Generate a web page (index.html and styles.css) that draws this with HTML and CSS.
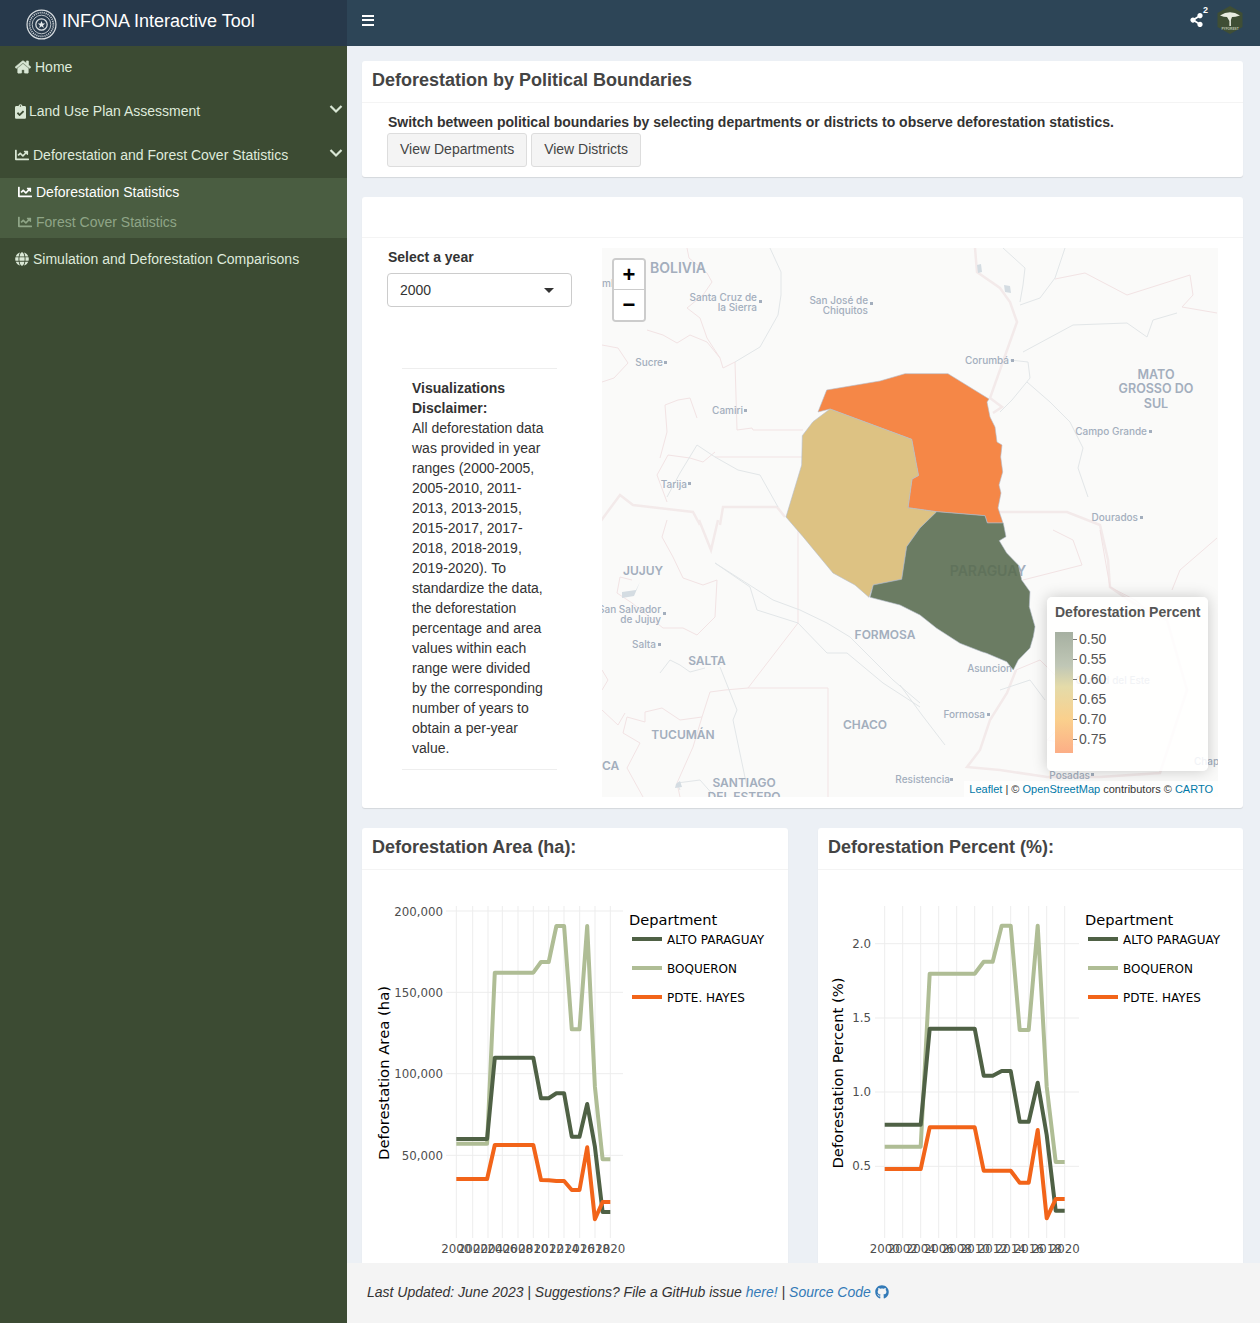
FILE: index.html
```html
<!DOCTYPE html>
<html lang="en">
<head>
<meta charset="utf-8">
<title>INFONA Interactive Tool</title>
<link rel="stylesheet" href="styles.css">
</head>
<body>
<div class="app">
  <aside class="sidebar">
    <div class="brand">
      <svg class="seal" viewBox="0 0 30 30"><circle cx="15" cy="15" r="14" class="seal-a"/><circle cx="15" cy="15" r="11.5" class="seal-b"/><circle cx="15" cy="15" r="9" class="seal-c"/><circle cx="15" cy="15" r="5.5" class="seal-a"/><polygon points="15,11.5 16,14 18.6,14 16.5,15.7 17.3,18.3 15,16.7 12.7,18.3 13.5,15.7 11.4,14 14,14" class="seal-s"/></svg>
      <span>INFONA Interactive Tool</span>
    </div>
    <nav class="menu">
      <a class="item item-home"><svg class="ico ico-home" viewBox="0 0 576 512"><path d="M280.37 148.26L96 300.11V464a16 16 0 0 0 16 16l112.06-.29a16 16 0 0 0 15.92-16V368a16 16 0 0 1 16-16h64a16 16 0 0 1 16 16v95.64a16 16 0 0 0 16 16.05L464 480a16 16 0 0 0 16-16V300L295.67 148.26a12.19 12.19 0 0 0-15.3 0zM571.6 251.47L488 182.56V44.05a12 12 0 0 0-12-12h-56a12 12 0 0 0-12 12v72.61L318.47 43a48 48 0 0 0-61 0L4.34 251.47a12 12 0 0 0-1.6 16.9l25.5 31A12 12 0 0 0 45.15 301l235.22-193.74a12.19 12.19 0 0 1 15.3 0L530.9 301a12 12 0 0 0 16.9-1.6l25.5-31a12 12 0 0 0-1.7-16.93z"/></svg><span>Home</span></a>
      <a class="item"><svg class="ico ico-clip" viewBox="0 0 384 512"><path d="M336 64h-80c0-35.3-28.7-64-64-64s-64 28.7-64 64H48C21.5 64 0 85.5 0 112v352c0 26.5 21.5 48 48 48h288c26.5 0 48-21.5 48-48V112c0-26.5-21.5-48-48-48zM192 40c13.3 0 24 10.7 24 24s-10.7 24-24 24-24-10.7-24-24 10.7-24 24-24zm121.2 231.8l-143 141.8c-4.7 4.7-12.3 4.6-17-.1l-82.6-83.3c-4.7-4.7-4.6-12.3.1-17L99.1 285c4.7-4.7 12.3-4.6 17 .1l46 46.4 106-105.2c4.7-4.7 12.3-4.6 17 .1l28.2 28.4c4.7 4.8 4.6 12.3-.1 17z"/></svg><span>Land Use Plan Assessment</span><svg class="chev" viewBox="0 0 14 10"><polyline points="1.5,2 7,7.5 12.5,2"/></svg></a>
      <a class="item"><svg class="ico" viewBox="0 0 512 512"><path d="M496 384H64V80c0-8.84-7.16-16-16-16H16C7.16 64 0 71.16 0 80v336c0 17.67 14.33 32 32 32h464c8.84 0 16-7.16 16-16v-32c0-8.84-7.16-16-16-16zM464 96H345.94c-21.38 0-32.09 25.85-16.97 40.97l32.4 32.4L288 242.75l-73.37-73.37c-12.5-12.5-32.76-12.5-45.25 0l-68.69 68.69c-6.25 6.25-6.25 16.38 0 22.63l22.62 22.62c6.25 6.25 16.38 6.25 22.63 0L192 237.25l73.37 73.37c12.5 12.5 32.76 12.5 45.25 0l96-96 32.4 32.4c15.12 15.12 40.97 4.41 40.97-16.97V112c.01-8.84-7.15-16-15.99-16z"/></svg><span>Deforestation and Forest Cover Statistics</span><svg class="chev" viewBox="0 0 14 10"><polyline points="1.5,2 7,7.5 12.5,2"/></svg></a>
      <div class="submenu">
        <a class="subitem active"><svg class="ico" viewBox="0 0 512 512"><path d="M496 384H64V80c0-8.84-7.16-16-16-16H16C7.16 64 0 71.16 0 80v336c0 17.67 14.33 32 32 32h464c8.84 0 16-7.16 16-16v-32c0-8.84-7.16-16-16-16zM464 96H345.94c-21.38 0-32.09 25.85-16.97 40.97l32.4 32.4L288 242.75l-73.37-73.37c-12.5-12.5-32.76-12.5-45.25 0l-68.69 68.69c-6.25 6.25-6.25 16.38 0 22.63l22.62 22.62c6.25 6.25 16.38 6.25 22.63 0L192 237.25l73.37 73.37c12.5 12.5 32.76 12.5 45.25 0l96-96 32.4 32.4c15.12 15.12 40.97 4.41 40.97-16.97V112c.01-8.84-7.15-16-15.99-16z"/></svg><span>Deforestation Statistics</span></a>
        <a class="subitem"><svg class="ico" viewBox="0 0 512 512"><path d="M496 384H64V80c0-8.84-7.16-16-16-16H16C7.16 64 0 71.16 0 80v336c0 17.67 14.33 32 32 32h464c8.84 0 16-7.16 16-16v-32c0-8.84-7.16-16-16-16zM464 96H345.94c-21.38 0-32.09 25.85-16.97 40.97l32.4 32.4L288 242.75l-73.37-73.37c-12.5-12.5-32.76-12.5-45.25 0l-68.69 68.69c-6.25 6.25-6.25 16.38 0 22.63l22.62 22.62c6.25 6.25 16.38 6.25 22.63 0L192 237.25l73.37 73.37c12.5 12.5 32.76 12.5 45.25 0l96-96 32.4 32.4c15.12 15.12 40.97 4.41 40.97-16.97V112c.01-8.84-7.15-16-15.99-16z"/></svg><span>Forest Cover Statistics</span></a>
      </div>
      <a class="item item-sim"><svg class="ico" viewBox="0 0 496 512"><path d="M336.5 160C322 70.7 287.8 8 248 8s-74 62.7-88.5 152h177zM152 256c0 22.2 1.2 43.5 3.3 64h185.3c2.1-20.5 3.3-41.8 3.3-64s-1.2-43.5-3.3-64H155.3c-2.1 20.5-3.3 41.8-3.3 64zm324.7-96c-28.6-67.9-86.5-120.4-158-141.6 24.4 33.8 41.2 84.7 50 141.6h108zM177.2 18.4C105.8 39.6 47.8 92.1 19.3 160h108c8.7-56.9 25.5-107.8 49.9-141.6zM487.4 192H372.7c2.1 21 3.3 42.5 3.3 64s-1.2 43-3.3 64h114.6c5.5-20.5 8.6-41.8 8.6-64s-3.1-43.5-8.5-64zM120 256c0-21.5 1.2-43 3.3-64H8.6C3.2 212.5 0 233.8 0 256s3.2 43.5 8.6 64h114.6c-2-21-3.2-42.5-3.2-64zm39.5 96c14.5 89.3 48.7 152 88.5 152s74-62.7 88.5-152h-177zm159.3 141.6c71.4-21.2 129.4-73.7 158-141.6h-108c-8.8 56.9-25.6 107.8-50 141.6zM19.3 352c28.6 67.9 86.5 120.4 158 141.6-24.4-33.8-41.2-84.7-50-141.6h-108z"/></svg><span>Simulation and Deforestation Comparisons</span></a>
    </nav>
  </aside>

  <div class="main">
    <header class="navbar">
      <div class="burger"><i></i><i></i><i></i></div>
      <div class="nav-right">
        <div class="share"><svg viewBox="0 0 448 512"><path d="M352 320c-22.608 0-43.387 7.819-59.79 20.895l-102.486-64.054a96.551 96.551 0 0 0 0-41.683l102.486-64.054C308.613 184.181 329.392 192 352 192c53.019 0 96-42.981 96-96S405.019 0 352 0s-96 42.981-96 96c0 7.158.79 14.13 2.276 20.841L155.79 180.895C139.387 167.819 118.608 160 96 160c-53.019 0-96 42.981-96 96s42.981 96 96 96c22.608 0 43.387-7.819 59.79-20.895l102.486 64.054A96.301 96.301 0 0 0 256 416c0 53.019 42.981 96 96 96s96-42.981 96-96-42.981-96-96-96z"/></svg><b>2</b></div>
        <svg class="hex" viewBox="0 0 26 28"><polygon points="13,0 25.5,7 25.5,21 13,28 .5,21 .5,7" class="hex-bg"/><path d="M3 9.5 Q13 3 23 9.5 Q18 11 15 11 L13.9 14 L13.9 20 L12.4 20 L12.4 15 L10 11 Q7 11 3 9.5Z" class="hex-tree"/><text x="13" y="23.5" class="hex-txt">PYFOREST</text></svg>
      </div>
    </header>

    <main class="content">
      <section class="card card-switch">
        <h2 class="card-head">Deforestation by Political Boundaries</h2>
        <div class="switch-body">
          <p class="switch-text">Switch between political boundaries by selecting departments or districts to observe deforestation statistics.</p>
          <div class="btns"><button class="btn">View Departments</button><button class="btn">View Districts</button></div>
        </div>
      </section>

      <section class="card card-map">
        <div class="card-head empty"></div>
        <div class="map-row">
          <div class="controls">
            <label class="ctl-label">Select a year</label>
            <div class="select">2000<i class="caret"></i></div>
            <div class="disclaimer">
              <strong>Visualizations Disclaimer:</strong>
              All deforestation data was provided in year ranges (2000-2005, 2005-2010, 2011-2013, 2013-2015, 2015-2017, 2017-2018, 2018-2019, 2019-2020). To standardize the data, the deforestation percentage and area values within each range were divided by the corresponding number of years to obtain a per-year value.
            </div>
          </div>
          <div class="map">
            <svg class="map-svg" viewBox="602 248 616 549" width="616" height="549">
              <g class="halo">
                <polyline points="600,522 620,495 633,505 693,512 700,525"/>
                <polyline points="720,525 723,507 777,507 785,517"/>
                <polyline points="975,248 977,272 1000,288 1010,302 1017,322 990,398 1002,407 993,413"/>
                <polyline points="998,512 1067,512 1100,525 1108,560 1110,587 1133,603 1167,620 1187,690 1160,773 1100,777 1047,777 1000,770 967,767 980,750 990,720 1007,693 1016,670"/>
                <polyline points="699,520 711,550 718,520"/>
              </g>
              <g class="bline">
                <polyline points="687,248 689,258 707,273 712,282 703,295 687,308 700,318 707,338 720,358 723,368 735,362 737,430 752,428 753,430 803,430"/>
                <polyline points="715,457 803,457"/>
                <polyline points="647,330 663,335 677,343 690,335 707,342 720,358"/>
                <polyline points="668,455 690,458 703,462 715,452"/>
                <polyline points="668,455 657,475 667,502"/>
                <polyline points="665,405 678,400 690,398 697,418"/>
                <polyline points="665,405 667,432 660,458"/>
                <polyline points="602,345 618,348 628,363 614,378 602,382"/>
                <polyline points="667,520 662,537 673,557 683,578 703,585 717,580 715,617 697,635 683,628 663,628 632,603 617,593 620,577 632,580"/>
                <polyline points="798,530 798,623 748,688 725,690 710,692 702,717 680,720 662,708 645,712 645,722 627,717 623,733 640,743 627,768 643,797"/>
                <polyline points="748,688 828,688 828,797"/>
                <polyline points="702,717 693,747 677,783 680,797"/>
                <polyline points="602,670 608,680 602,690"/>
                <polyline points="602,710 618,725 625,713"/>
                <polyline points="1055,279 1085,273 1127,295 1190,275 1193,295 1182,307 1217,313"/>
                <polyline points="1053,530 1073,540 1082,565 1023,580"/>
                <polyline points="1100,530 1110,587 1135,600 1160,620"/>
                <polyline points="1217,538 1180,570 1172,590"/>
                <polyline points="1016,670 1040,660 1060,680 1062,725 1047,740 1077,745"/>
              </g>
              <g class="rline">
                <polyline points="770,248 781,272 781,295 778,315 760,347 735,362"/>
                <polyline points="1003,248 1025,268 1023,285 1020,302"/>
                <polyline points="1065,248 1055,278 1040,298 1020,305"/>
                <polyline points="1023,352 1073,325 1127,323 1147,337 1153,320 1177,313"/>
                <polyline points="1027,382 1050,402 1070,422 1083,448 1078,468 1088,497"/>
                <polyline points="1010,360 1028,362 1030,378 1012,400 1000,412"/>
                <polyline points="715,563 750,587 757,610 798,623 827,653 847,653 883,683 920,707"/>
                <polyline points="715,563 773,600 800,610 827,623 850,637 893,680 920,703"/>
                <polyline points="720,667 737,710 733,720 747,787"/>
                <polyline points="660,673 670,660 680,665 690,672 705,668"/>
                <polyline points="667,497 680,473 697,445 715,457 738,470 760,475 778,507"/>
                <polyline points="900,685 922,715 945,745"/>
                <polyline points="1000,690 1030,680 1045,700"/>
                <polyline points="680,790 677,783 700,780 715,797"/>
              </g>
              <g class="water">
                <polygon points="622,592 636,590 640,582 634,596 622,598"/>
                <polygon points="977,265 981,264 982,272 978,273"/>
                <polygon points="1004,285 1010,286 1011,293 1005,292"/>
                <polygon points="676,784 680,781 682,787 675,788"/>
              </g>
              <g class="lbl">
                <text x="678" y="273" class="xl" text-anchor="middle">BOLIVIA</text>
                <text x="602" y="287">mb</text>
                <text x="757" y="301" text-anchor="end">Santa Cruz de</text>
                <text x="757" y="311" text-anchor="end">la Sierra</text>
                <text x="868" y="304" text-anchor="end">San José de</text>
                <text x="868" y="314" text-anchor="end">Chiquitos</text>
                <text x="663" y="366" text-anchor="end">Sucre</text>
                <text x="743" y="414" text-anchor="end">Camiri</text>
                <text x="1009" y="364" text-anchor="end">Corumbá</text>
                <text x="1147" y="435" text-anchor="end">Campo Grande</text>
                <text x="1138" y="521" text-anchor="end">Dourados</text>
                <text x="687" y="488" text-anchor="end">Tarija</text>
                <text x="661" y="613" text-anchor="end">San Salvador</text>
                <text x="661" y="623" text-anchor="end">de Jujuy</text>
                <text x="656" y="648" text-anchor="end">Salta</text>
                <text x="1012" y="672" text-anchor="end">Asuncion</text>
                <text x="985" y="718" text-anchor="end">Formosa</text>
                <text x="950" y="783" text-anchor="end">Resistencia</text>
                <text x="1090" y="779" text-anchor="end">Posadas</text>
                <text x="1150" y="684" text-anchor="end">Ciudad del Este</text>
                <text x="1194" y="765">Chap</text>
                <text x="1156" y="379" class="big" text-anchor="middle">MATO</text>
                <text x="1156" y="393" class="big" text-anchor="middle">GROSSO DO</text>
                <text x="1156" y="408" class="big" text-anchor="middle">SUL</text>
                <text x="643" y="575" class="mid" text-anchor="middle">JUJUY</text>
                <text x="707" y="665" class="mid" text-anchor="middle">SALTA</text>
                <text x="885" y="639" class="mid" text-anchor="middle">FORMOSA</text>
                <text x="865" y="729" class="mid" text-anchor="middle">CHACO</text>
                <text x="683" y="739" class="mid" text-anchor="middle">TUCUMÁN</text>
                <text x="744" y="787" class="mid" text-anchor="middle">SANTIAGO</text>
                <text x="744" y="801" class="mid" text-anchor="middle">DEL ESTERO</text>
                <text x="602" y="770" class="mid">CA</text>
                <text x="988" y="576" class="xl" text-anchor="middle">PARAGUAY</text>
              </g>
              <g class="dots">
                <rect x="759" y="300" width="3" height="3"/><rect x="870" y="302" width="3" height="3"/><rect x="664" y="361" width="3" height="3"/><rect x="744" y="409" width="3" height="3"/><rect x="1011" y="359" width="3" height="3"/><rect x="1149" y="430" width="3" height="3"/><rect x="1140" y="516" width="3" height="3"/><rect x="688" y="482" width="3" height="3"/><rect x="663" y="612" width="3" height="3"/><rect x="658" y="643" width="3" height="3"/><rect x="987" y="713" width="3" height="3"/><rect x="950" y="778" width="3" height="3"/><rect x="1091" y="773" width="3" height="3"/>
              </g>
              <g class="polys">
                <polygon class="p-orange" points="826.7,390 880,381 905,373.7 948,373.7 989,399 987,402 990,417 995,427 997,442 1002,445 1000.7,457 1002.7,472 999,485 1001,493 998,508 1003,523 987.3,523 985,515.7 936.7,511.7 908,507.7 912,479 918.5,475.5 911.7,439.3 830,409 818,412"/>
                <polygon class="p-tan" points="908,507.7 936.7,511.7 920,528 906.7,546.7 901.7,579.3 873.3,585 869,597.3 855,585 833,573 803,536.7 786,517 801.7,465 802.3,435.7 813,421.7 830,409 911.7,439.3 918.5,475.5 912,479"/>
                <polygon class="p-green" points="936.7,511.7 985,515.7 987.3,523 1003.3,523 1006,536.7 999.3,540.7 1006.7,553 1018.3,565 1021.7,580 1030,591.7 1029.3,606.7 1035,626.7 1033.3,636.7 1030,648 1018.3,660 1013.3,670 1006.7,661.7 986.7,653.3 981.7,651.7 960,643.3 936.7,628.3 920,615 900,605 870,597.3 873.3,585 901.7,579.3 906.7,546.7 920,528"/>
              </g>
            </svg>
            <div class="zoom"><div class="zoom-btn zoom-in">+</div><div class="zoom-btn">−</div></div>
            <div class="legend">
              <div class="legend-title">Deforestation Percent</div>
              <div class="legend-body">
                <div class="ramp"></div>
                <ul class="legend-scale"><li>0.50</li><li>0.55</li><li>0.60</li><li>0.65</li><li>0.70</li><li>0.75</li></ul>
              </div>
            </div>
            <div class="attrib"><a>Leaflet</a> | © <a>OpenStreetMap</a> contributors © <a>CARTO</a></div>
          </div>
        </div>
      </section>

      <div class="charts">
        <section class="card card-chart">
          <h2 class="card-head">Deforestation Area (ha):</h2>
          <svg class="chart" viewBox="362 870 426 440" width="426" height="440">
            <g class="grid">
              <line x1="456.3" x2="456.3" y1="906" y2="1238"/><line x1="472.7" x2="472.7" y1="906" y2="1238"/><line x1="488" x2="488" y1="906" y2="1238"/><line x1="502.3" x2="502.3" y1="906" y2="1238"/><line x1="518" x2="518" y1="906" y2="1238"/><line x1="533.3" x2="533.3" y1="906" y2="1238"/><line x1="548.7" x2="548.7" y1="906" y2="1238"/><line x1="564" x2="564" y1="906" y2="1238"/><line x1="579.7" x2="579.7" y1="906" y2="1238"/><line x1="595" x2="595" y1="906" y2="1238"/><line x1="610.3" x2="610.3" y1="906" y2="1238"/>
              <line x1="446" x2="623" y1="911" y2="911"/><line x1="446" x2="623" y1="992.3" y2="992.3"/><line x1="446" x2="623" y1="1073.7" y2="1073.7"/><line x1="446" x2="623" y1="1155.3" y2="1155.3"/>
            </g>
            <polyline class="s-boq" points="456.3,1143.7 464,1143.7 471.7,1143.7 479.4,1143.7 487.1,1143.7 494.8,972.7 502.5,972.7 510.2,972.7 517.9,972.7 525.6,972.7 533.3,972.7 541,962 548.7,962 556.4,926 564.1,926 571.8,1029.3 579.5,1029.3 587.2,926 594.9,1086.7 602.6,1159.3 610.3,1159.3"/>
            <polyline class="s-alto" points="456.3,1139 464,1139 471.7,1139 479.4,1139 487.1,1139 494.8,1057.7 502.5,1057.7 510.2,1057.7 517.9,1057.7 525.6,1057.7 533.3,1057.7 541,1098.3 548.7,1098.3 556.4,1093.3 564.1,1093.3 571.8,1136.7 579.5,1136.7 587.2,1104 594.9,1146.7 602.6,1212 610.3,1212"/>
            <polyline class="s-hayes" points="456.3,1179 464,1179 471.7,1179 479.4,1179 487.1,1179 494.8,1145 502.5,1145 510.2,1145 517.9,1145 525.6,1145 533.3,1145 541,1180 548.7,1180.3 556.4,1181 564.1,1181 571.8,1190 579.5,1190 587.2,1147.3 594.9,1219.3 602.6,1202 610.3,1202"/>
            <g class="ytick"><text x="443" y="916">200,000</text><text x="443" y="997">150,000</text><text x="443" y="1078">100,000</text><text x="443" y="1160">50,000</text></g>
            <g class="xtick"><text x="456.3" y="1253">2000</text><text x="472.7" y="1253">2002</text><text x="488" y="1253">2004</text><text x="502.3" y="1253">2006</text><text x="518" y="1253">2008</text><text x="533.3" y="1253">2010</text><text x="548.7" y="1253">2012</text><text x="564" y="1253">2014</text><text x="579.7" y="1253">2016</text><text x="595" y="1253">2018</text><text x="610.3" y="1253">2020</text></g>
            <text class="ytitle" transform="translate(388.5 1073) rotate(-90)">Deforestation Area (ha)</text>
            <text class="ltitle" x="629" y="925">Department</text>
            <line class="s-alto" x1="632" x2="662" y1="939" y2="939"/><text class="ltext" x="667" y="944">ALTO PARAGUAY</text>
            <line class="s-boq" x1="632" x2="662" y1="968" y2="968"/><text class="ltext" x="667" y="973">BOQUERON</text>
            <line class="s-hayes" x1="632" x2="662" y1="997" y2="997"/><text class="ltext" x="667" y="1002">PDTE. HAYES</text>
          </svg>
        </section>
        <section class="card card-chart">
          <h2 class="card-head">Deforestation Percent (%):</h2>
          <svg class="chart" viewBox="818 870 426 440" width="426" height="440">
            <g class="grid">
              <line x1="884.7" x2="884.7" y1="906" y2="1238"/><line x1="902.7" x2="902.7" y1="906" y2="1238"/><line x1="920.7" x2="920.7" y1="906" y2="1238"/><line x1="938.7" x2="938.7" y1="906" y2="1238"/><line x1="956.7" x2="956.7" y1="906" y2="1238"/><line x1="974.7" x2="974.7" y1="906" y2="1238"/><line x1="992.7" x2="992.7" y1="906" y2="1238"/><line x1="1010.7" x2="1010.7" y1="906" y2="1238"/><line x1="1028.7" x2="1028.7" y1="906" y2="1238"/><line x1="1046.7" x2="1046.7" y1="906" y2="1238"/><line x1="1064.7" x2="1064.7" y1="906" y2="1238"/>
              <line x1="875" x2="1079" y1="943.7" y2="943.7"/><line x1="875" x2="1079" y1="1018" y2="1018"/><line x1="875" x2="1079" y1="1092" y2="1092"/><line x1="875" x2="1079" y1="1166.3" y2="1166.3"/>
            </g>
            <polyline class="s-boq" points="884.7,1146.7 893.7,1146.7 902.7,1146.7 911.7,1146.7 920.7,1146.7 929.7,973.7 938.7,973.7 947.7,973.7 956.7,973.7 965.7,973.7 974.7,973.7 983.7,961.7 992.7,961.7 1001.7,925.7 1010.7,925.7 1019.7,1030 1028.7,1030 1037.7,925.7 1046.7,1086.7 1055.7,1162 1064.7,1162"/>
            <polyline class="s-alto" points="884.7,1124.7 893.7,1124.7 902.7,1124.7 911.7,1124.7 920.7,1124.7 929.7,1028.7 938.7,1028.7 947.7,1028.7 956.7,1028.7 965.7,1028.7 974.7,1028.7 983.7,1075.7 992.7,1075.7 1001.7,1071 1010.7,1071 1019.7,1121.7 1028.7,1121.7 1037.7,1082.7 1046.7,1135 1055.7,1210.7 1064.7,1210.7"/>
            <polyline class="s-hayes" points="884.7,1169 893.7,1169 902.7,1169 911.7,1169 920.7,1169 929.7,1127.3 938.7,1127.3 947.7,1127.3 956.7,1127.3 965.7,1127.3 974.7,1127.3 983.7,1170.7 992.7,1170.7 1001.7,1170.7 1010.7,1170.7 1019.7,1182.7 1028.7,1182.7 1037.7,1130 1046.7,1218.3 1055.7,1199 1064.7,1199"/>
            <g class="ytick"><text x="871" y="948">2.0</text><text x="871" y="1022">1.5</text><text x="871" y="1096">1.0</text><text x="871" y="1170">0.5</text></g>
            <g class="xtick"><text x="884.7" y="1253">2000</text><text x="902.7" y="1253">2002</text><text x="920.7" y="1253">2004</text><text x="938.7" y="1253">2006</text><text x="956.7" y="1253">2008</text><text x="974.7" y="1253">2010</text><text x="992.7" y="1253">2012</text><text x="1010.7" y="1253">2014</text><text x="1028.7" y="1253">2016</text><text x="1046.7" y="1253">2018</text><text x="1064.7" y="1253">2020</text></g>
            <text class="ytitle" transform="translate(843 1073) rotate(-90)">Deforestation Percent (%)</text>
            <text class="ltitle" x="1085" y="925">Department</text>
            <line class="s-alto" x1="1088" x2="1118" y1="939" y2="939"/><text class="ltext" x="1123" y="944">ALTO PARAGUAY</text>
            <line class="s-boq" x1="1088" x2="1118" y1="968" y2="968"/><text class="ltext" x="1123" y="973">BOQUERON</text>
            <line class="s-hayes" x1="1088" x2="1118" y1="997" y2="997"/><text class="ltext" x="1123" y="1002">PDTE. HAYES</text>
          </svg>
        </section>
      </div>
    </main>

    <footer class="footer">
      <em>Last Updated: June 2023 | Suggestions? File a GitHub issue <a>here!</a> | <a>Source Code <svg class="gh" viewBox="0 0 496 512"><path d="M165.9 397.4c0 2-2.3 3.6-5.2 3.6-3.3 0-5.6-1.6-5.6-3.6 0-2 2.3-3.6 5.2-3.6 3-.3 5.6 1.3 5.6 3.6zm-31.1-4.5c-.7 2 1.3 4.3 4.3 4.9 2.6 1 5.6 0 6.2-2s-1.3-4.3-4.3-5.2c-2.6-.7-5.5.3-6.2 2.3zm44.2-1.7c-2.9.7-4.9 2.6-4.6 4.9.3 2 2.9 3.3 5.9 2.6 2.9-.7 4.9-2.6 4.6-4.6-.3-1.9-3-3.2-5.9-2.9zM244.8 8C106.1 8 0 113.3 0 252c0 110.9 69.8 205.8 169.5 239.2 12.8 2.3 17.3-5.6 17.3-12.1 0-6.2-.3-40.4-.3-61.4 0 0-70 15-84.7-29.8 0 0-11.4-29.1-27.8-36.6 0 0-22.9-15.7 1.6-15.4 0 0 24.9 2 38.6 25.8 21.9 38.6 58.6 27.5 72.9 20.9 2.3-16 8.8-27.1 16-33.7-55.9-6.2-112.3-14.3-112.3-110.5 0-27.5 7.6-41.3 23.6-58.9-2.6-6.5-11.1-33.3 2.6-67.9 20.9-6.5 69 27 69 27 20-5.6 41.5-8.5 62.8-8.5s42.8 2.9 62.8 8.5c0 0 48.1-33.6 69-27 13.7 34.7 5.2 61.4 2.6 67.9 16 17.7 25.8 31.5 25.8 58.9 0 96.5-58.9 104.2-114.8 110.5 9.2 7.9 17 22.9 17 46.4 0 33.7-.3 75.4-.3 83.6 0 6.5 4.6 14.4 17.3 12.1C428.2 457.8 496 362.9 496 252 496 113.3 383.5 8 244.8 8z"/></svg></a></em>
    </footer>
  </div>
</div>
</body>
</html>
```

FILE: styles.css
```css
* { box-sizing: border-box; }
html, body { margin: 0; height: 100%; overflow: hidden; }
body { font-family: "Liberation Sans", Arial, sans-serif; font-size: 14px; color: #333; line-height: 20px; }
.app { display: grid; grid-template-columns: 347px 1fr; height: 1323px; }

/* Sidebar */
.sidebar { background: #3c4b33; color: #dfeadb; }
.brand { height: 46px; background: #27394b; color: #fff; display: flex; align-items: center; padding-left: 26px; font-size: 18px; gap: 5px; padding-bottom: 4px; }
.seal { width: 31px; height: 31px; margin-top: 7px; flex: none; }
.brand span { margin-top: -1px; }
.seal circle { fill: none; stroke: #d8dde0; }
.seal-a { stroke-width: 1.2; }
.seal-b { stroke-width: 1.6; stroke-dasharray: 1 1; }
.seal-c { stroke-width: .8; }
.seal-s { fill: #e6eaec; }
.menu { display: flex; flex-direction: column; }
.item { height: 44px; display: flex; align-items: center; padding-left: 15px; position: relative; gap: 4px; }
.item-home { height: 43px; padding-bottom: 1px; }
.item-sim { padding-bottom: 2px; }
.ico { width: 14px; height: 14px; fill: #d9e7d5; flex: none; }
.ico-home { width: 16px; stroke: #d9e7d5; stroke-width: 22; }
.ico-clip { width: 11px; height: 15px; margin-right: -1px; }
.chev { position: absolute; right: 4px; top: 15px; width: 14px; height: 10px; }
.chev polyline { fill: none; stroke: #d9e7d5; stroke-width: 2.2; }
.submenu { background: #4a5d41; margin-top: 1px; }
.subitem { height: 30px; display: flex; align-items: center; padding: 0 0 2px 18px; gap: 4px; color: #8fa587; }
.subitem .ico { fill: #8fa587; }
.subitem.active { color: #fff; }
.subitem.active .ico { fill: #fff; }

/* Main column */
.main { display: flex; flex-direction: column; min-width: 0; height: 1323px; background: #ecf0f5; }
.navbar { height: 46px; flex: none; background: #2d4557; display: flex; align-items: center; justify-content: space-between; padding: 0 17px 0 15px; }
.burger { display: flex; flex-direction: column; gap: 2.5px; margin-top: -6px; }
.burger i { display: block; width: 12px; height: 2px; background: #fff; }
.nav-right { display: flex; align-items: center; gap: 9px; margin-top: -6px; }
.share { position: relative; width: 13px; height: 14px; margin-right: 5px; }
.share svg { width: 13px; height: 14px; fill: #fff; display: block; }
.share b { position: absolute; left: 13px; top: -9px; font-size: 9px; line-height: 12px; color: #fff; }
.hex { width: 26px; height: 28px; }
.hex-bg { fill: #3f4e35; }
.hex-tree { fill: #e8ebe0; }
.hex-txt { fill: #b9c2ac; font-size: 3.2px; font-weight: 700; text-anchor: middle; }

.content { flex: 1; min-height: 0; overflow: hidden; padding: 15px 17px 0 15px; display: flex; flex-direction: column; gap: 20px; }
.card { background: #fff; border-radius: 3px; box-shadow: 0 1px 1px rgba(0,0,0,.1); flex: none; }
.card-head { margin: 0; height: 42px; padding: 0 10px; font-size: 18px; line-height: 39px; font-weight: 700; color: #444; border-bottom: 1px solid #f4f4f4; }
.card-head.empty { height: 41px; }
.card-switch { height: 116px; }
.switch-body { padding: 9px 25px; }
.switch-text { margin: 0; padding-left: 1px; font-weight: 700; color: #333; line-height: 20px; }
.btns { display: flex; gap: 4px; margin-top: 1px; }
.btn { font: inherit; color: #444; background: #f4f4f4; border: 1px solid #ddd; border-radius: 3px; height: 34px; padding: 0 12px 3px; }

.card-map { height: 611px; }
.map-row { display: flex; padding: 10px 25px 0 25px; }
.controls { width: 215px; flex: none; }
.ctl-label { display: block; font-weight: 700; padding-left: 1px; margin: -1px 0 6px; }
.select { width: 185px; height: 34px; border: 1px solid #ccc; border-radius: 4px; padding: 6px 12px; position: relative; color: #333; background: #fff; }
.caret { position: absolute; right: 17px; top: 14px; border: 5px solid transparent; border-top-color: #333; border-bottom: 0; }
.disclaimer { width: 155px; margin: 61px 0 0 15px; padding: 9px 10px 10px 10px; border-top: 1px solid #eee; border-bottom: 1px solid #eee; height: 402px; }
.disclaimer strong { display: block; }

.map { position: relative; width: 616px; height: 549px; background: #fafaf9; overflow: hidden; }
.map-svg { display: block; }
.halo polyline { fill: none; stroke: #f3eaea; stroke-width: 2.5; }
.bline polyline { fill: none; stroke: #f2e3e4; stroke-width: 1; }
.rline polyline { fill: none; stroke: #e2e6e8; stroke-width: 1; }
.water polygon { fill: #d4dce2; }
.lbl text { font-family: Inter, "Liberation Sans", sans-serif; font-size: 10px; font-weight: 500; fill: #a3aebd; }
.lbl text.big { font-size: 12.5px; font-weight: 600; }
.lbl text.xl { font-size: 14px; font-weight: 600; }
.lbl text.mid { font-size: 12px; font-weight: 600; }
.dots rect { fill: #a3aebd; }
.polys polygon { stroke: #b4bccb; stroke-width: .6; }
.p-orange { fill: #f5823f; fill-opacity: .96; }
.p-tan { fill: #dcc07e; fill-opacity: .96; }
.p-green { fill: #566a4d; fill-opacity: .88; }

.zoom { position: absolute; left: 10px; top: 10px; width: 34px; border: 2px solid rgba(0,0,0,.2); border-radius: 4px; overflow: hidden; background: #fff; }
.zoom-btn { height: 30px; font: 700 22px/30px "Liberation Sans", sans-serif; text-align: center; color: #000; background: #fff; }
.zoom-in { border-bottom: 1px solid #ccc; }
.legend { position: absolute; left: 445px; top: 349px; width: 161px; height: 174px; background: rgba(255,255,255,.85); border-radius: 5px; box-shadow: 0 0 15px rgba(0,0,0,.2); padding: 6px 8px; color: #555; }
.legend-title { font-weight: 700; line-height: 18px; white-space: nowrap; }
.legend-body { display: flex; margin-top: 11px; position: relative; }
.ramp { width: 18px; height: 121px; background: linear-gradient(#a6b0a1, #c0c7b6 28%, #e4dba9 45%, #fad08d 72%, #fcae86); }
.legend-scale { list-style: none; margin: 0; padding: 0 0 0 6px; }
.legend-scale li { height: 20px; line-height: 15px; position: relative; color: #555; }
.legend-scale li::before { content: ""; position: absolute; left: -6px; top: 7px; width: 4px; height: 1px; background: #777; }
.attrib { position: absolute; right: 0; bottom: 0; height: 16px; padding: 0 5px; font-size: 11px; line-height: 16px; background: rgba(255,255,255,.7); color: #333; white-space: nowrap; }
.attrib a { color: #0078a8; }

.charts { display: grid; grid-template-columns: 426px 425px; column-gap: 30px; }
.card-chart { height: 480px; overflow: hidden; }
.chart { display: block; }
.grid line { stroke: #ededed; stroke-width: 1; }
.chart polyline, .chart line.s-alto, .chart line.s-boq, .chart line.s-hayes { fill: none; stroke-width: 4; stroke-linejoin: round; }
.s-alto { stroke: #4f6145; }
.s-boq { stroke: #afbd95; }
.s-hayes { stroke: #f26419; }
.chart text { font-family: "DejaVu Sans", Verdana, sans-serif; }
.ytick text { font-size: 11.8px; fill: #4d4d4d; text-anchor: end; }
.xtick text { font-size: 11.8px; fill: #4d4d4d; text-anchor: middle; }
.ytitle { font-size: 14.8px; fill: #000; text-anchor: middle; }
.ltitle { font-size: 14.6px; fill: #000; }
.ltext { font-size: 12px; fill: #000; }

.footer { height: 60px; flex: none; background: #f4f4f4; padding: 19px 20px; color: #333; position: relative; z-index: 1; }
.footer a { color: #337ab7; }
.gh { width: 14px; height: 14px; fill: #337ab7; vertical-align: -2px; }
```
